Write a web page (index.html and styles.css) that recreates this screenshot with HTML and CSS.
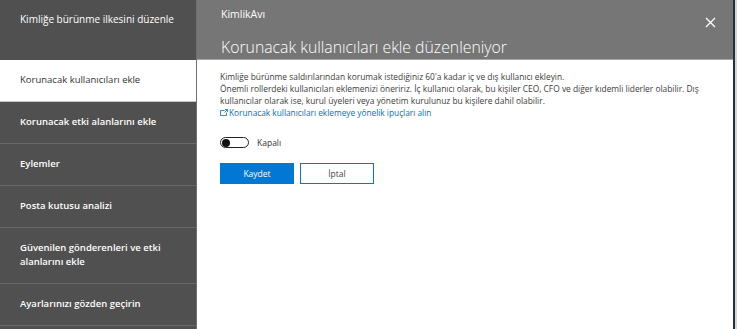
FILE: index.html
```html
<!DOCTYPE html>
<html lang="tr">
<head>
  <meta charset="UTF-8">
  <meta name="viewport" content="width=device-width, initial-scale=1.0">
  <title>KimlikAvı</title>
  <link rel="stylesheet" href="styles.css">
</head>
<body>
  <div class="app">
    <!-- Wizard steps -->
    <nav class="sidebar">
      <div class="side-head">Kimliğe bürünme ilkesini düzenle</div>
      <a href="#" class="side-item active">Korunacak kullanıcıları ekle</a>
      <a href="#" class="side-item">Korunacak etki alanlarını ekle</a>
      <a href="#" class="side-item">Eylemler</a>
      <a href="#" class="side-item">Posta kutusu analizi</a>
      <a href="#" class="side-item">Güvenilen gönderenleri ve etki alanlarını ekle</a>
      <a href="#" class="side-item">Ayarlarınızı gözden geçirin</a>
    </nav>

    <!-- Edit panel -->
    <main class="main">
      <header class="main-head">
        <div class="head-text">
          <div class="head-sub">KimlikAvı</div>
          <h1 class="head-title">Korunacak kullanıcıları ekle düzenleniyor</h1>
        </div>
        <button class="close" aria-label="Kapat">
          <svg width="11" height="11" viewBox="0 0 11 11">
            <path d="M1 1 L10 10 M10 1 L1 10" stroke="#fff" stroke-width="1.3" fill="none"/>
          </svg>
        </button>
      </header>

      <section class="content">
        <p class="desc">Kimliğe bürünme saldırılarından korumak istediğiniz 60'a kadar iç ve dış kullanıcı ekleyin.</p>
        <p class="desc">Önemli rollerdeki kullanıcıları eklemenizi öneririz. İç kullanıcı olarak, bu kişiler CEO, CFO ve diğer kıdemli liderler olabilir. Dış kullanıcılar olarak ise, kurul üyeleri veya yönetim kurulunuz bu kişilere dahil olabilir.</p>
        <a href="#" class="tip-link">
          <svg width="8" height="7" viewBox="0 0 8 7">
            <path d="M4.5 1.5 H0.5 V6.5 H6.5 V3.5" stroke="#0072c6" stroke-width="0.8" fill="none"/>
            <path d="M5 0.5 H7.5 V3 M7.5 0.5 L4.5 3.5" stroke="#0072c6" stroke-width="0.8" fill="none"/>
          </svg>Korunacak kullanıcıları eklemeye yönelik ipuçları alın
        </a>

        <label class="toggle-row">
          <span class="toggle"><span class="knob"></span></span>
          <span class="toggle-label">Kapalı</span>
        </label>

        <div class="actions">
          <button class="btn primary">Kaydet</button>
          <button class="btn">İptal</button>
        </div>
      </section>
    </main>
  </div>
</body>
</html>
```

FILE: styles.css
```css
body {
  margin: 0;
  padding: 0;
  width: 737px;
  height: 329px;
  overflow: hidden;
  background-color: #d4d4d4;
  font-family: "Open Sans", "Noto Sans", sans-serif;
}

.app {
  display: flex;
  width: 733px;
  height: 329px;
  border-right: 2px solid #23303e;
}

.sidebar {
  width: 196px;
  flex-shrink: 0;
  background-color: #505050;
  border-right: 1px solid #6f6f6f;
  display: flex;
  flex-direction: column;
}

.side-head {
  height: 60px;
  box-sizing: border-box;
  padding: 11px 20px 0;
  color: #fff;
  font-size: 10px;
  line-height: 16px;
  white-space: nowrap;
}

.side-item {
  display: block;
  padding: 13px 20px 14px;
  line-height: 14px;
  font-size: 9.5px;
  font-weight: 600;
  color: #fff;
  text-decoration: none;
  border-bottom: 1px solid #686868;
}

.side-item.active {
  background-color: #fff;
  color: #333;
  font-weight: 400;
  border-bottom-color: #c6c6c6;
}

.main {
  flex: 1;
  background-color: #fff;
  display: flex;
  flex-direction: column;
}

.main-head {
  height: 52px;
  background-color: #767676;
  border-bottom: 1px solid #a6a6a6;
  display: flex;
  justify-content: space-between;
  padding: 7px 17px 0 24px;
}

.head-sub {
  color: #fff;
  font-size: 10.5px;
  line-height: 14px;
}

.head-title {
  margin: 15px 0 0;
  color: #fff;
  font-size: 15.8px;
  font-weight: 300;
  line-height: 22px;
}

.close {
  background: none;
  border: none;
  padding: 0;
  margin-top: 9px;
  width: 11px;
  height: 11px;
  cursor: pointer;
}

.content {
  padding: 11px 24px 0 23px;
}

.desc {
  margin: 0;
  width: 485px;
  font-size: 8.4px;
  line-height: 12px;
  color: #3c3c3c;
}

.tip-link {
  display: block;
  font-size: 8.3px;
  line-height: 12px;
  color: #0072c6;
  text-decoration: none;
}

.tip-link svg {
  margin-right: 1px;
}

.toggle-row {
  display: flex;
  align-items: center;
  margin-top: 18px;
  gap: 8px;
}

.toggle {
  width: 25px;
  height: 9px;
  border: 1px solid #222;
  border-radius: 6px;
  display: flex;
  align-items: center;
  padding: 0 1px;
}

.knob {
  width: 8px;
  height: 8px;
  border-radius: 50%;
  background-color: #111;
}

.toggle-label {
  font-size: 8.5px;
  color: #333;
}

.actions {
  display: flex;
  gap: 6px;
  margin-top: 15px;
}

.btn {
  width: 74px;
  height: 21px;
  background-color: #fff;
  border: 1px solid #0078d4;
  color: #444;
  font-family: "Open Sans", "Noto Sans", sans-serif;
  font-size: 8.5px;
  cursor: pointer;
}

.btn.primary {
  background-color: #0078d4;
  color: #fff;
}
```
